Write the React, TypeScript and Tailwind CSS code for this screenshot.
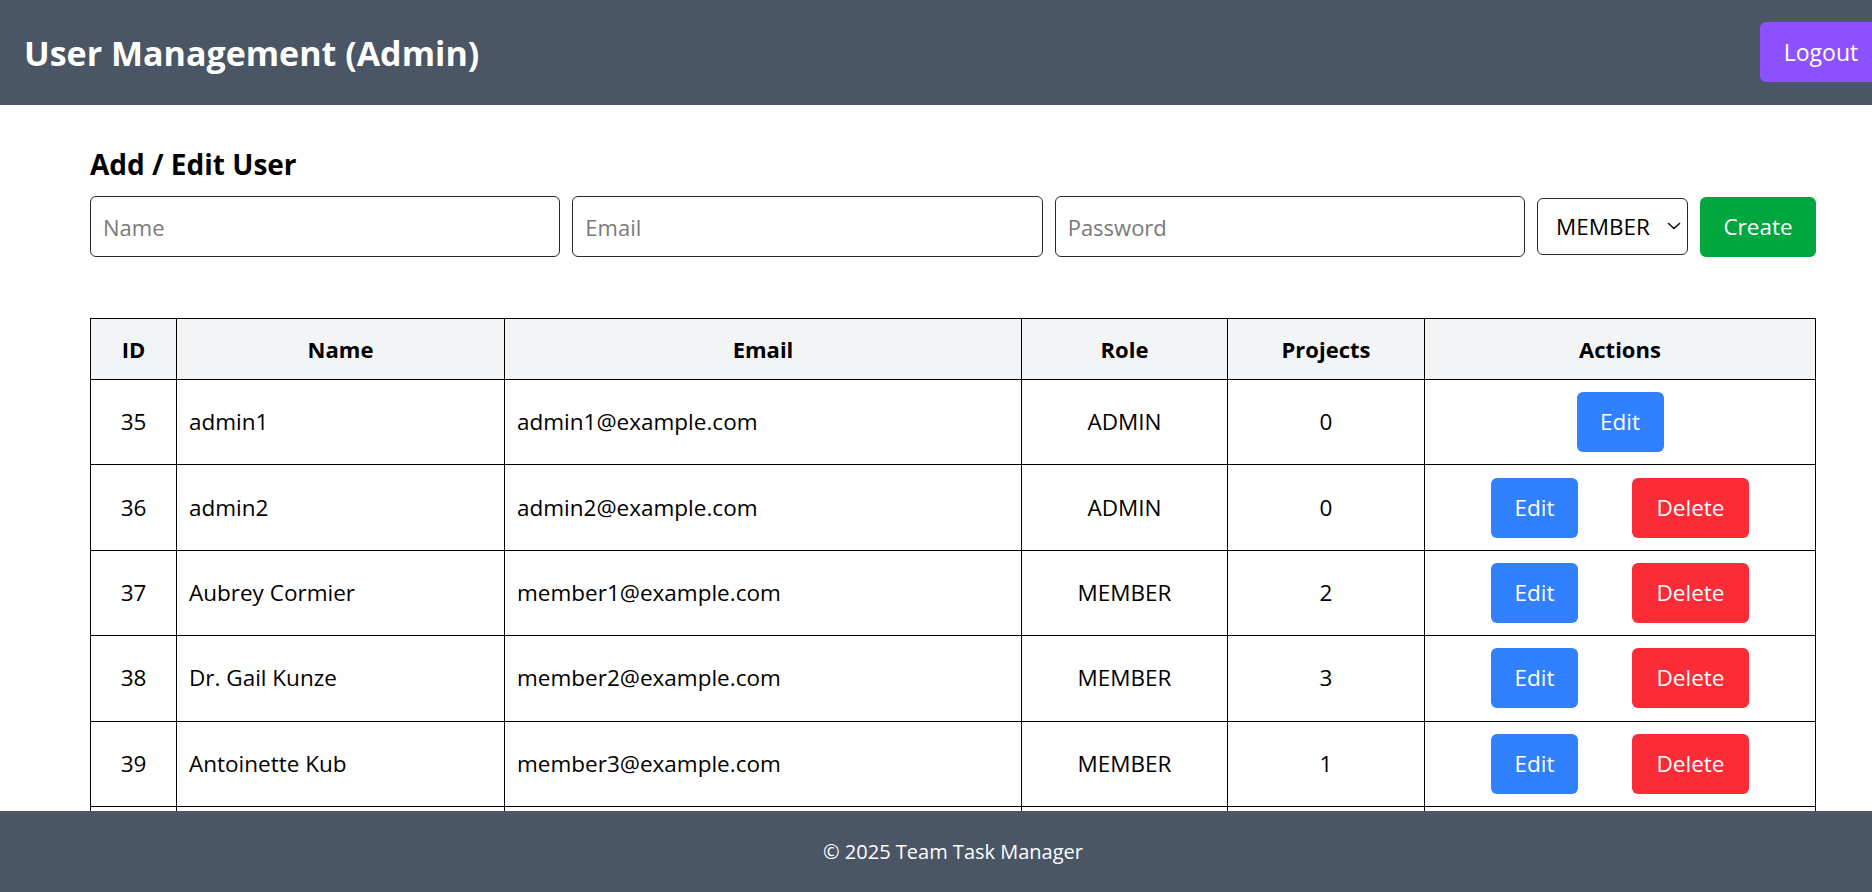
import React from "react";

type User = { id: number; name: string; email: string; role: string; projects: number };

const users: User[] = [
  { id: 35, name: "admin1", email: "admin1@example.com", role: "ADMIN", projects: 0 },
  { id: 36, name: "admin2", email: "admin2@example.com", role: "ADMIN", projects: 0 },
  { id: 37, name: "Aubrey Cormier", email: "member1@example.com", role: "MEMBER", projects: 2 },
  { id: 38, name: "Dr. Gail Kunze", email: "member2@example.com", role: "MEMBER", projects: 3 },
  { id: 39, name: "Antoinette Kub", email: "member3@example.com", role: "MEMBER", projects: 1 },
  { id: 40, name: "Marcus Ledner", email: "member4@example.com", role: "MEMBER", projects: 2 },
  { id: 41, name: "Lela Hintz", email: "member5@example.com", role: "MEMBER", projects: 1 },
];

function Chevron() {
  return (
    <svg width="16" height="10" viewBox="0 0 16 10" fill="none">
      <path d="M2.5 2.5 L8 7.5 L13.5 2.5" stroke="#111" strokeWidth="1.6" strokeLinecap="round" strokeLinejoin="round" />
    </svg>
  );
}

export default function App() {
  return (
    <div className="relative h-[892px] w-[1872px] overflow-hidden bg-white font-['Open_Sans','Noto_Sans',sans-serif] text-black">
      <div className="w-[1906px]">
        <header className="flex h-[105px] items-center justify-between bg-[#4a5565] px-6">
          <h1 className="text-[34px] font-bold leading-[48px] text-white">User Management (Admin)</h1>
          <button className="mb-[2px] h-[60px] w-[122px] rounded-[6px] bg-[#8e51ff] text-[23px] leading-[36px] text-white">
            Logout
          </button>
        </header>

        <main className="px-[90px] pt-[38px]">
          <h2 className="mb-[11px] text-[28px] font-bold leading-[42px]">Add / Edit User</h2>
          <div className="flex items-center gap-3">
            <input
              placeholder="Name"
              className="h-[61px] min-w-0 flex-1 rounded-[6px] border border-[#2a2a2a] px-3 text-[22px] outline-none placeholder:text-[#7a7a7a]"
            />
            <input
              placeholder="Email"
              className="h-[61px] min-w-0 flex-1 rounded-[6px] border border-[#2a2a2a] px-3 text-[22px] outline-none placeholder:text-[#7a7a7a]"
            />
            <input
              placeholder="Password"
              type="password"
              className="h-[61px] min-w-0 flex-1 rounded-[6px] border border-[#2a2a2a] px-3 text-[22px] outline-none placeholder:text-[#7a7a7a]"
            />
            <div className="relative h-[57px] w-[151px] shrink-0">
              <select
                defaultValue="MEMBER"
                className="h-full w-full appearance-none rounded-[6px] border border-[#2a2a2a] bg-white pl-[18px] pr-8 text-[22.5px] outline-none"
              >
                <option value="MEMBER">MEMBER</option>
                <option value="ADMIN">ADMIN</option>
              </select>
              <span className="pointer-events-none absolute right-[6px] top-[23px]">
                <Chevron />
              </span>
            </div>
            <button className="h-[60px] w-[116px] shrink-0 rounded-[6px] bg-[#00a63e] text-[22.5px] leading-[36px] text-white">
              Create
            </button>
          </div>

          <table className="mt-[61px] w-full table-fixed border-collapse text-[22.5px] leading-[36px]">
            <thead>
              <tr className="bg-[#f3f4f6]">
                <th className="w-[86px] border border-black px-3 py-3 text-[22px] font-bold">ID</th>
                <th className="w-[328px] border border-black px-3 py-3 text-[22px] font-bold">Name</th>
                <th className="w-[517px] border border-black px-3 py-3 text-[22px] font-bold">Email</th>
                <th className="w-[206px] border border-black px-3 py-3 text-[22px] font-bold">Role</th>
                <th className="w-[197px] border border-black px-3 py-3 text-[22px] font-bold">Projects</th>
                <th className="border border-black px-3 py-3 text-[22px] font-bold">Actions</th>
              </tr>
            </thead>
            <tbody>
              {users.map((u) => (
                <tr key={u.id} className="h-[85.4px]">
                  <td className="border border-black px-3 text-center">{u.id}</td>
                  <td className="border border-black px-3">{u.name}</td>
                  <td className="border border-black px-3">{u.email}</td>
                  <td className="border border-black px-3 text-center">{u.role}</td>
                  <td className="border border-black px-3 text-center">{u.projects}</td>
                  <td className="border border-black p-3">
                    <div className="flex justify-evenly">
                      <button className="h-[60px] w-[87px] rounded-[6px] bg-[#3080ff] text-[22.5px] leading-[36px] text-white">
                        Edit
                      </button>
                      {u.id !== 35 ? (
                        <button className="h-[60px] w-[117px] rounded-[6px] bg-[#fb2c36] text-[22.5px] leading-[36px] text-white">
                          Delete
                        </button>
                      ) : null}
                    </div>
                  </td>
                </tr>
              ))}
            </tbody>
          </table>
        </main>

        <footer className="absolute bottom-0 left-0 flex h-[81px] w-[1906px] items-center justify-center bg-[#4a5565] text-[20px] text-white">
          © 2025 Team Task Manager
        </footer>
      </div>
    </div>
  );
}
